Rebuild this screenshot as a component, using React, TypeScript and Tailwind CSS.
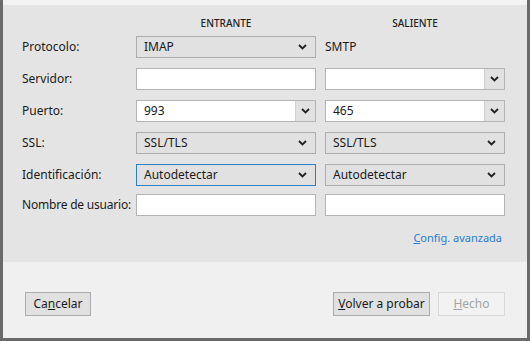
import React from 'react'

function Chevron() {
  return (
    <svg width="9" height="6" viewBox="0 0 9 6" className="shrink-0">
      <path d="M1 1 L4.5 4.5 L8 1" fill="none" stroke="#222" strokeWidth="1.8" />
    </svg>
  )
}

function Select({ value, focused }: { value: string; focused?: boolean }) {
  return (
    <div
      className={
        'flex h-[22px] items-center justify-between border bg-[#e1e1e1] pl-[7px] pr-[8px] ' +
        (focused ? 'border-[#2f7fc4]' : 'border-[#adadad]')
      }
    >
      <span>{value}</span>
      <Chevron />
    </div>
  )
}

function Input({ value = '' }: { value?: string }) {
  return (
    <div className="flex h-[22px] items-center border border-[#b4b4b4] bg-white pl-[7px]">
      {value}
    </div>
  )
}

function Combo({ value = '' }: { value?: string }) {
  return (
    <div className="flex h-[22px] items-stretch border border-[#b4b4b4] bg-white">
      <span className="flex flex-1 items-center pl-[7px]">{value}</span>
      <span className="flex w-[20px] items-center justify-center border-l border-[#d0d0d0] bg-[#e1e1e1]">
        <Chevron />
      </span>
    </div>
  )
}

function Label({ children }: { children: React.ReactNode }) {
  return <div className="flex h-[22px] items-center whitespace-nowrap">{children}</div>
}

function Button({
  children,
  disabled,
  className = '',
}: {
  children: React.ReactNode
  disabled?: boolean
  className?: string
}) {
  return (
    <div
      className={
        'flex h-[24px] items-center justify-center border ' +
        (disabled
          ? 'border-[#d8d8d8] bg-[#f2f2f2] text-[#a3a3a3]'
          : 'border-[#adadad] bg-[#e1e1e1] text-[#1a1a1a]') +
        ' ' +
        className
      }
    >
      {children}
    </div>
  )
}

export default function App() {
  return (
    <div
      className="flex h-[341px] w-[530px] flex-col border-x-[3px] border-b-[3px] border-[#6a6a6a] bg-[#f0f0f0] text-[12px] text-[#1b1b1b]"
      style={{ fontFamily: '"Noto Sans", "Open Sans", sans-serif' }}
    >
      <div className="h-[5px] bg-[#f3f3f3]" />
      <div className="flex h-[257px] flex-col bg-[#e4e4e4] pl-[19px] pr-[22px] pt-[11px]">
        <div className="grid grid-cols-[105px_180px_180px] gap-x-[9px] text-[10px] font-medium leading-[14px] text-[#222]">
          <div />
          <div className="text-center">ENTRANTE</div>
          <div className="text-center">SALIENTE</div>
        </div>
        <div className="mt-[6px] grid grid-cols-[105px_180px_180px] gap-x-[9px] gap-y-[10px]">
          <Label>Protocolo:</Label>
          <Select value="IMAP" />
          <Label>SMTP</Label>

          <Label>Servidor:</Label>
          <Input />
          <Combo />

          <Label>Puerto:</Label>
          <Combo value="993" />
          <Combo value="465" />

          <Label>SSL:</Label>
          <Select value="SSL/TLS" />
          <Select value="SSL/TLS" />

          <Label>Identificación:</Label>
          <Select value="Autodetectar" focused />
          <Select value="Autodetectar" />
        </div>
        <div className="mt-[8px] grid grid-cols-[105px_180px_180px] gap-x-[9px]">
          <Label>
            <span className="tracking-[-0.2px]">Nombre de usuario:</span>
          </Label>
          <Input />
          <Input />
        </div>
        <div className="mt-[14px] flex justify-end pr-[3px] text-[11px] text-[#2a7bcf]">
          <span>
            <span className="underline">C</span>onfig. avanzada
          </span>
        </div>
      </div>
      <div className="flex items-start pl-[22px] pr-[22px] pt-[30px]">
        <Button className="w-[66px]">
          <span>
            Ca<span className="underline">n</span>celar
          </span>
        </Button>
        <div className="flex-1" />
        <Button className="w-[97px]">
          <span>
            <span className="underline">V</span>olver a probar
          </span>
        </Button>
        <Button disabled className="ml-[8px] w-[67px]">
          <span>
            <span className="underline">H</span>echo
          </span>
        </Button>
      </div>
    </div>
  )
}
